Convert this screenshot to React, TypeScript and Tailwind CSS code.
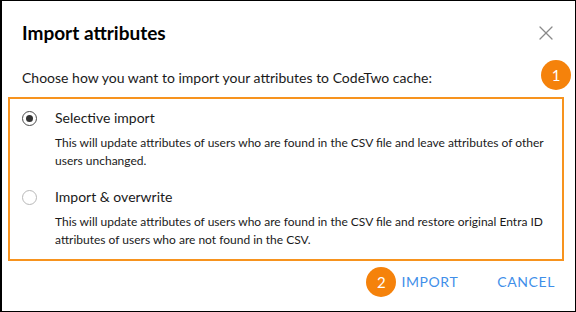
import { X } from 'lucide-react'

const font = { fontFamily: 'Lato, "Noto Sans", sans-serif' }

function Badge({ n }: { n: number }) {
  return (
    <span className="flex h-[30px] w-[30px] shrink-0 items-center justify-center rounded-full bg-[#f5820b] text-[15px] text-white">
      {n}
    </span>
  )
}

function Option({ checked, label, desc }: { checked: boolean; label: string; desc: string[] }) {
  return (
    <div className="flex gap-[18px]">
      <span
        className={`mt-[3px] flex h-[15px] w-[15px] shrink-0 items-center justify-center rounded-full border ${
          checked ? 'border-[#4b4b4b]' : 'border-[#b8b8b8]'
        }`}
      >
        {checked && <span className="h-[7px] w-[7px] rounded-full bg-[#333]" />}
      </span>
      <div>
        <div className="text-[14px] leading-[20px] text-[#1a1a1a]">{label}</div>
        <div className="mt-[6px] whitespace-nowrap text-[12px] leading-[18px] text-[#1a1a1a]">
          {desc.map((d) => (
            <div key={d}>{d}</div>
          ))}
        </div>
      </div>
    </div>
  )
}

export default function App() {
  return (
    <div style={font} className="h-[312px] w-[576px] bg-white">
      <div className="flex h-[312px] w-[576px] flex-col border border-l-2 border-black">
        <div className="flex items-center justify-between pl-[20px] pr-[17px] pt-[20px]">
          <h1 className="text-[19px] font-bold leading-[24px] text-black">Import attributes</h1>
          <X className="h-[24px] w-[24px] text-[#8a8a8a]" strokeWidth={1.3} />
        </div>
        <div className="mt-[15px] flex items-start justify-between pl-[20px] pr-[4px]">
          <p className="mt-[8px] text-[14px] leading-[20px] text-[#1a1a1a]">
            Choose how you want to import your attributes to CodeTwo cache:
          </p>
          <Badge n={1} />
        </div>
        <div className="ml-[6px] mr-[11px] mt-[7px] flex flex-col gap-[17px] border-2 border-[#f7931e] pb-[10px] pl-[12px] pt-[9px]">
          <Option
            checked
            label="Selective import"
            desc={[
              'This will update attributes of users who are found in the CSV file and leave attributes of other',
              'users unchanged.',
            ]}
          />
          <Option
            checked={false}
            label="Import & overwrite"
            desc={[
              'This will update attributes of users who are found in the CSV file and restore original Entra ID',
              'attributes of users who are not found in the CSV.',
            ]}
          />
        </div>
        <div className="mt-[6px] flex items-center justify-end gap-[39px] pr-[20px]">
          <div className="flex items-center gap-[5px]">
            <Badge n={2} />
            <span className="text-[14px] leading-[20px] tracking-[0.6px] text-[#3f8fe9]">IMPORT</span>
          </div>
          <span className="text-[14px] leading-[20px] tracking-[0.6px] text-[#3f8fe9]">CANCEL</span>
        </div>
      </div>
    </div>
  )
}
